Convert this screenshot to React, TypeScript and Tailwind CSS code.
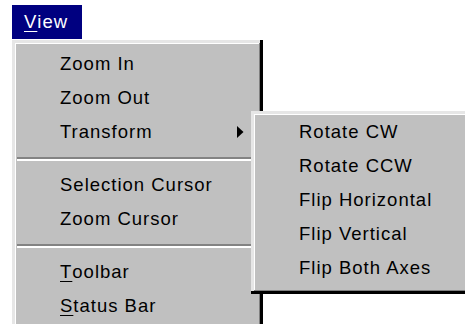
const font = { fontFamily: '"Liberation Sans", Arial, sans-serif' };

const bevel =
  'shadow-[inset_-3px_-3px_0_#000,inset_3px_3px_0_#e6e6e6,inset_-4px_-4px_0_#808080,inset_4px_4px_0_#fff]';

const Item = ({ children, arrow }: { children: React.ReactNode; arrow?: boolean }) => (
  <div className="relative flex h-[34px] items-center pl-[48px] text-[18.5px] tracking-[1px] text-black">
    {children}
    {arrow && (
      <svg className="absolute left-[225px] top-[11px]" width="7" height="12" viewBox="0 0 7 12">
        <polygon points="0,0 6.5,6 0,12" fill="#000" />
      </svg>
    )}
  </div>
);

const Sep = () => (
  <div className="flex h-[19px] flex-col justify-center px-[5px]">
    <div className="h-[2px] bg-[#838383]" />
    <div className="h-[2px] bg-white" />
  </div>
);

export default function App() {
  return (
    <div className="relative h-[324px] w-[465px] overflow-hidden bg-white" style={font}>
      {/* menu bar item */}
      <div className="pl-[12px] pt-[5px]">
        <div className="flex h-[34px] w-[70px] items-center pl-[12px] text-[18.5px] tracking-[1px] text-white bg-[#000080]">
          <span className="underline underline-offset-[3px]">V</span>iew
        </div>
      </div>

      {/* View menu */}
      <div className={`absolute left-[12px] top-[40px] w-[251px] bg-[#c0c0c0] pt-[7px] pb-[8px] ${bevel}`}>
        <Item>Zoom In</Item>
        <Item>Zoom Out</Item>
        <Item arrow>Transform</Item>
        <Sep />
        <Item>Selection Cursor</Item>
        <Item>Zoom Cursor</Item>
        <Sep />
        <Item>
          <span className="underline underline-offset-[3px]">T</span>oolbar
        </Item>
        <Item>
          <span className="underline underline-offset-[3px]">S</span>tatus Bar
        </Item>
      </div>

      {/* Transform submenu */}
      <div className={`absolute left-[251px] top-[111px] w-[220px] bg-[#c0c0c0] pt-[4px] pb-[9px] ${bevel}`}>
        <Item>Rotate CW</Item>
        <Item>Rotate CCW</Item>
        <Item>Flip Horizontal</Item>
        <Item>Flip Vertical</Item>
        <Item>Flip Both Axes</Item>
      </div>
    </div>
  );
}
